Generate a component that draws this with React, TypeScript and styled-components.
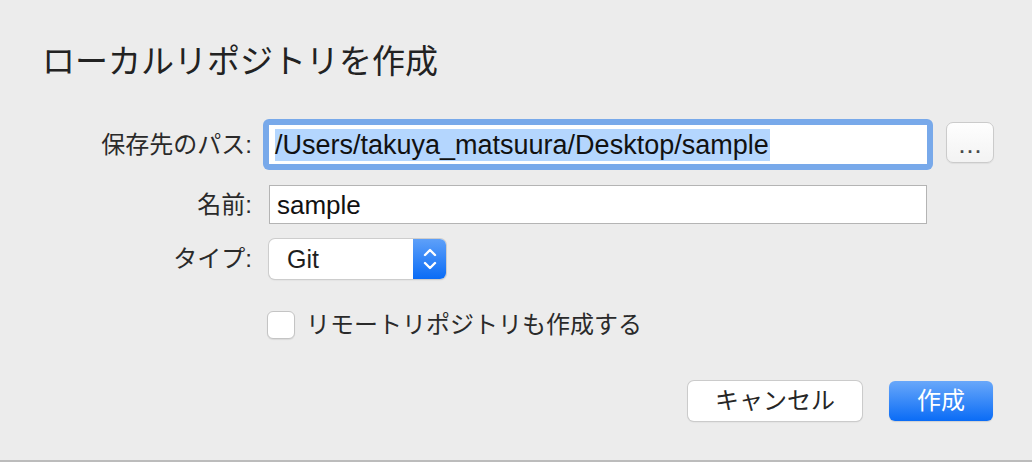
import styled, { createGlobalStyle } from "styled-components";

const GlobalStyle = createGlobalStyle`
  html, body {
    margin: 0;
    padding: 0;
    background: #ececec;
  }
  * {
    box-sizing: border-box;
  }
`;

const FONT = `"Liberation Sans", "Noto Sans CJK JP", sans-serif`;

export default function App() {
  return (
    <>
      <GlobalStyle />
      <Dialog>
        <Title>ローカルリポジトリを作成</Title>

        <Form>
          <Row $top={43}>
            <Label>保存先のパス:</Label>
            <FocusRing>
              <Field>
                <Selected>/Users/takuya_matsuura/Desktop/sample</Selected>
              </Field>
            </FocusRing>
            <BrowseButton>...</BrowseButton>
          </Row>

          <Row $top={21}>
            <Label>名前:</Label>
            <Field $bordered>sample</Field>
          </Row>

          <Row $top={15}>
            <Label>タイプ:</Label>
            <Popup>
              <PopupValue>Git</PopupValue>
              <PopupArrows>
                <svg width="14" height="24" viewBox="0 0 14 24">
                  <path
                    d="M2 8 L7 3 L12 8 M2 16 L7 21 L12 16"
                    fill="none"
                    stroke="#fff"
                    strokeWidth="2.4"
                    strokeLinecap="round"
                    strokeLinejoin="round"
                  />
                </svg>
              </PopupArrows>
            </Popup>
          </Row>

          <Row $top={31}>
            <Label />
            <CheckRow>
              <Checkbox />
              <CheckText>リモートリポジトリも作成する</CheckText>
            </CheckRow>
          </Row>
        </Form>

        <Footer>
          <Button>キャンセル</Button>
          <Button $primary>作成</Button>
        </Footer>
      </Dialog>
    </>
  );
}

const Dialog = styled.div`
  width: 1032px;
  height: 462px;
  padding-top: 42px;
  background: #ececec;
  border-bottom: 2px solid #bcbcbc;
  font-family: ${FONT};
  color: #262626;
  display: flex;
  flex-direction: column;
`;

const Title = styled.div`
  padding-left: 42px;
  font-size: 33px;
  line-height: 40px;
  color: #222;
`;

const Form = styled.div`
  display: flex;
  flex-direction: column;
`;

const Row = styled.div<{ $top: number }>`
  display: flex;
  align-items: center;
  margin-top: ${(p) => p.$top}px;
`;

const Label = styled.div`
  width: 269px;
  padding-right: 17px;
  text-align: right;
  font-size: 24px;
  line-height: 30px;
  color: #2a2a2a;
  flex-shrink: 0;
`;

const FocusRing = styled.div`
  margin: -6px;
  padding: 6px;
  border-radius: 6px;
  background: #78a9ea;
  display: flex;
`;

const Field = styled.div<{ $bordered?: boolean }>`
  width: 658px;
  height: 39px;
  background: #fff;
  border: ${(p) => (p.$bordered ? "1px solid #b4b4b4" : "none")};
  padding-left: ${(p) => (p.$bordered ? "7px" : "6px")};
  display: flex;
  align-items: center;
  font-size: ${(p) => (p.$bordered ? "26px" : "27px")};
  line-height: 32px;
  color: #111;
  white-space: nowrap;
  overflow: hidden;
`;

const Selected = styled.span`
  background: #b4d6fe;
  padding-right: 1px;
`;

const BrowseButton = styled.div`
  margin-left: 19px;
  margin-top: -4px;
  width: 48px;
  height: 41px;
  border: 1px solid #cbcbcb;
  border-radius: 7px;
  background: linear-gradient(#fefefe, #f3f3f3);
  box-shadow: 0 1px 1px rgba(0, 0, 0, 0.06);
  font-size: 18px;
  letter-spacing: 3px;
  line-height: 48px;
  text-align: center;
  padding-left: 3px;
  color: #4a4a4a;
  font-weight: bold;
`;

const Popup = styled.div`
  width: 177px;
  height: 40px;
  display: flex;
  border-radius: 6px;
  background: #fff;
  box-shadow: 0 0 0 1px #cdcdcd, 0 1px 2px rgba(0, 0, 0, 0.12);
  overflow: hidden;
`;

const PopupValue = styled.div`
  flex: 1;
  padding-left: 18px;
  font-size: 25px;
  line-height: 40px;
  color: #1e1e1e;
`;

const PopupArrows = styled.div`
  width: 33px;
  display: flex;
  align-items: center;
  justify-content: center;
  background: linear-gradient(#5ea0f9, #0a6cf6);
`;

const CheckRow = styled.div`
  display: flex;
  align-items: center;
  gap: 11px;
  margin-left: -2px;
`;

const Checkbox = styled.div`
  width: 28px;
  height: 28px;
  border-radius: 6px;
  background: #fff;
  border: 1px solid #c4c4c4;
  box-shadow: 0 1px 1px rgba(0, 0, 0, 0.08);
`;

const CheckText = styled.div`
  font-size: 24px;
  line-height: 30px;
  color: #2a2a2a;
`;

const Footer = styled.div`
  display: flex;
  justify-content: flex-end;
  gap: 27px;
  margin-top: 41px;
  padding-right: 39px;
`;

const Button = styled.div<{ $primary?: boolean }>`
  height: 40px;
  width: ${(p) => (p.$primary ? "104px" : "174px")};
  border-radius: 6px;
  font-size: 24px;
  line-height: 40px;
  text-align: center;
  color: ${(p) => (p.$primary ? "#fff" : "#262626")};
  background: ${(p) =>
    p.$primary ? "linear-gradient(#69a8fa, #0a6cf6)" : "#fff"};
  box-shadow: ${(p) =>
    p.$primary
      ? "0 1px 1px rgba(0, 0, 0, 0.12)"
      : "0 0 0 1px #cbcbcb, 0 1px 2px rgba(0, 0, 0, 0.12)"};
`;
